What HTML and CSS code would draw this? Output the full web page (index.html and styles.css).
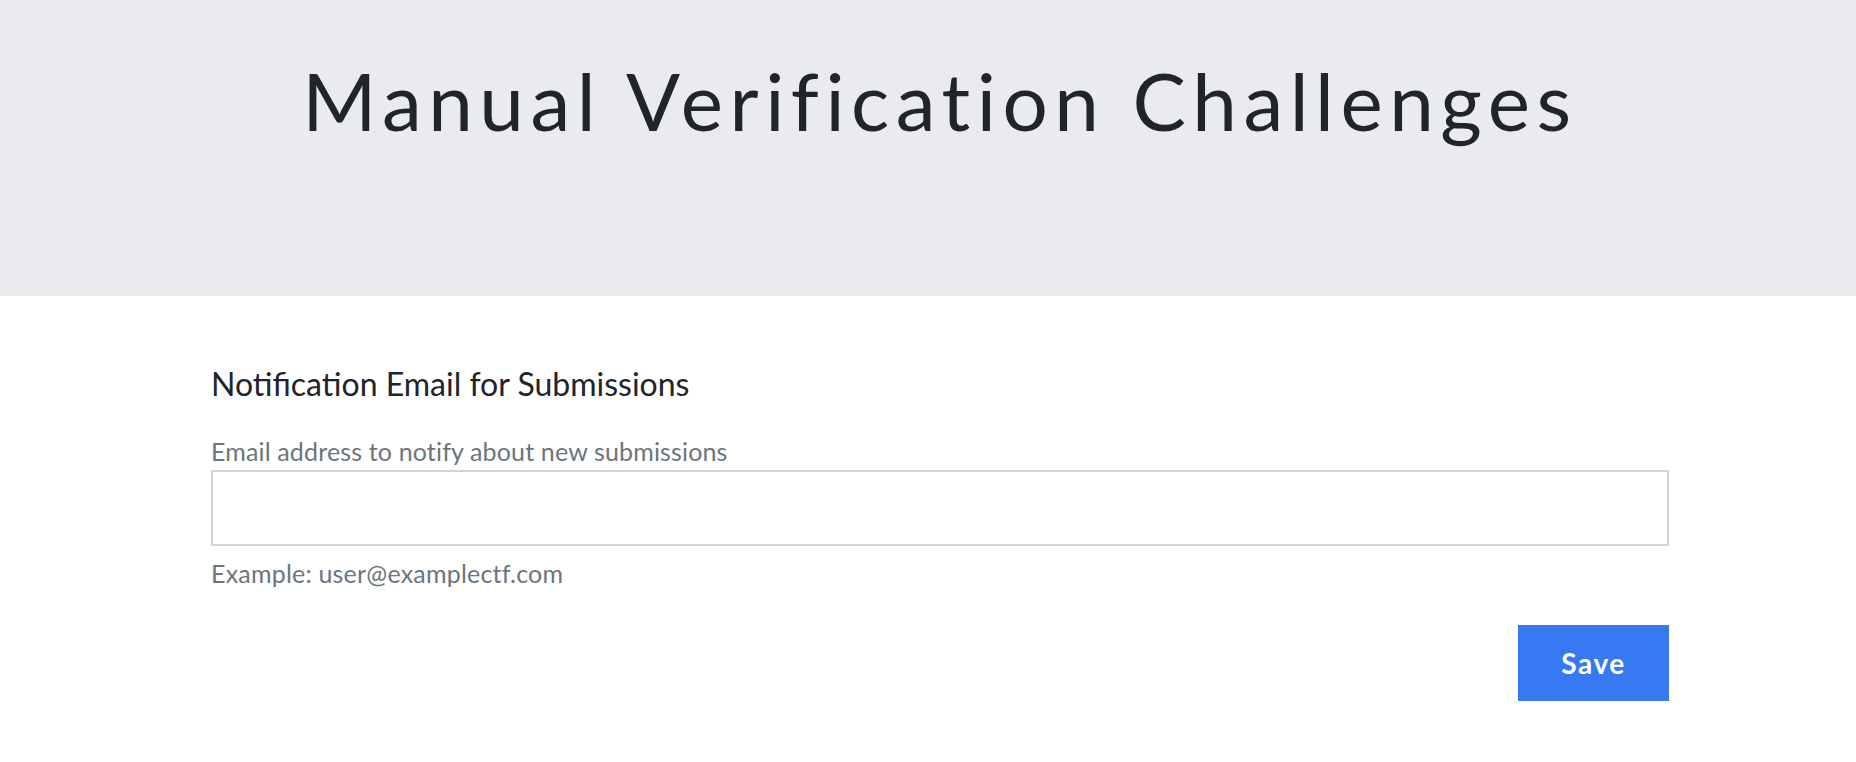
FILE: index.html
```html
<!DOCTYPE html>
<html lang="en">
<head>
<meta charset="utf-8">
<title>Manual Verification Challenges</title>
<link rel="stylesheet" href="styles.css">
</head>
<body>
<header class="jumbotron">
  <div class="container">
    <h1 class="title">Manual Verification Challenges</h1>
  </div>
</header>
<main class="container">
  <form class="settings">
    <h4 class="section-title">Notification Email for Submissions</h4>
    <label class="field-label" for="email">Email address to notify about new submissions</label>
    <input class="field-input" id="email" type="email">
    <small class="field-help">Example: user@examplectf.com</small>
    <div class="actions">
      <button class="btn-save" type="button">Save</button>
    </div>
  </form>
</main>
</body>
</html>
```
FILE: styles.css
```css
html, body {
  margin: 0;
  padding: 0;
  background: #ffffff;
  font-family: "Lato", "Liberation Sans", sans-serif;
  color: #212529;
}
.container {
  width: 1482px;
  margin: 0 auto;
  padding-left: 24px;
  box-sizing: border-box;
}
.jumbotron {
  background: #eaebef;
  height: 296px;
  padding-top: 52px;
  box-sizing: border-box;
}
.title {
  margin: 0;
  text-align: center;
  font-weight: 400;
  font-size: 80px;
  line-height: 96px;
  letter-spacing: 6.5px;
  color: #212529;
}
.settings {
  display: flex;
  flex-direction: column;
  padding-top: 69px;
}
.section-title {
  margin: 0;
  font-weight: 400;
  font-size: 32px;
  line-height: 38px;
  color: #212529;
}
.field-label {
  margin-top: 33px;
  font-size: 25px;
  line-height: 30px;
  letter-spacing: 0.15px;
  color: #6c757d;
}
.field-input {
  margin-top: 4px;
  height: 76px;
  box-sizing: border-box;
  border: 2px solid #ced4da;
  border-radius: 0;
  background: #fff;
  padding: 0 16px;
  font: inherit;
  font-size: 25px;
}
.field-help {
  margin-top: 12px;
  font-size: 25px;
  line-height: 30px;
  letter-spacing: 0.2px;
  color: #6c757d;
}
.actions {
  display: flex;
  justify-content: flex-end;
  margin-top: 37px;
}
.btn-save {
  width: 151px;
  height: 76px;
  border: none;
  border-radius: 0;
  background: #3779f3;
  color: #ffffff;
  font-family: "Lato", "Liberation Sans", sans-serif;
  font-weight: 700;
  font-size: 28px;
  letter-spacing: 1.5px;
  padding: 0;
}
```
